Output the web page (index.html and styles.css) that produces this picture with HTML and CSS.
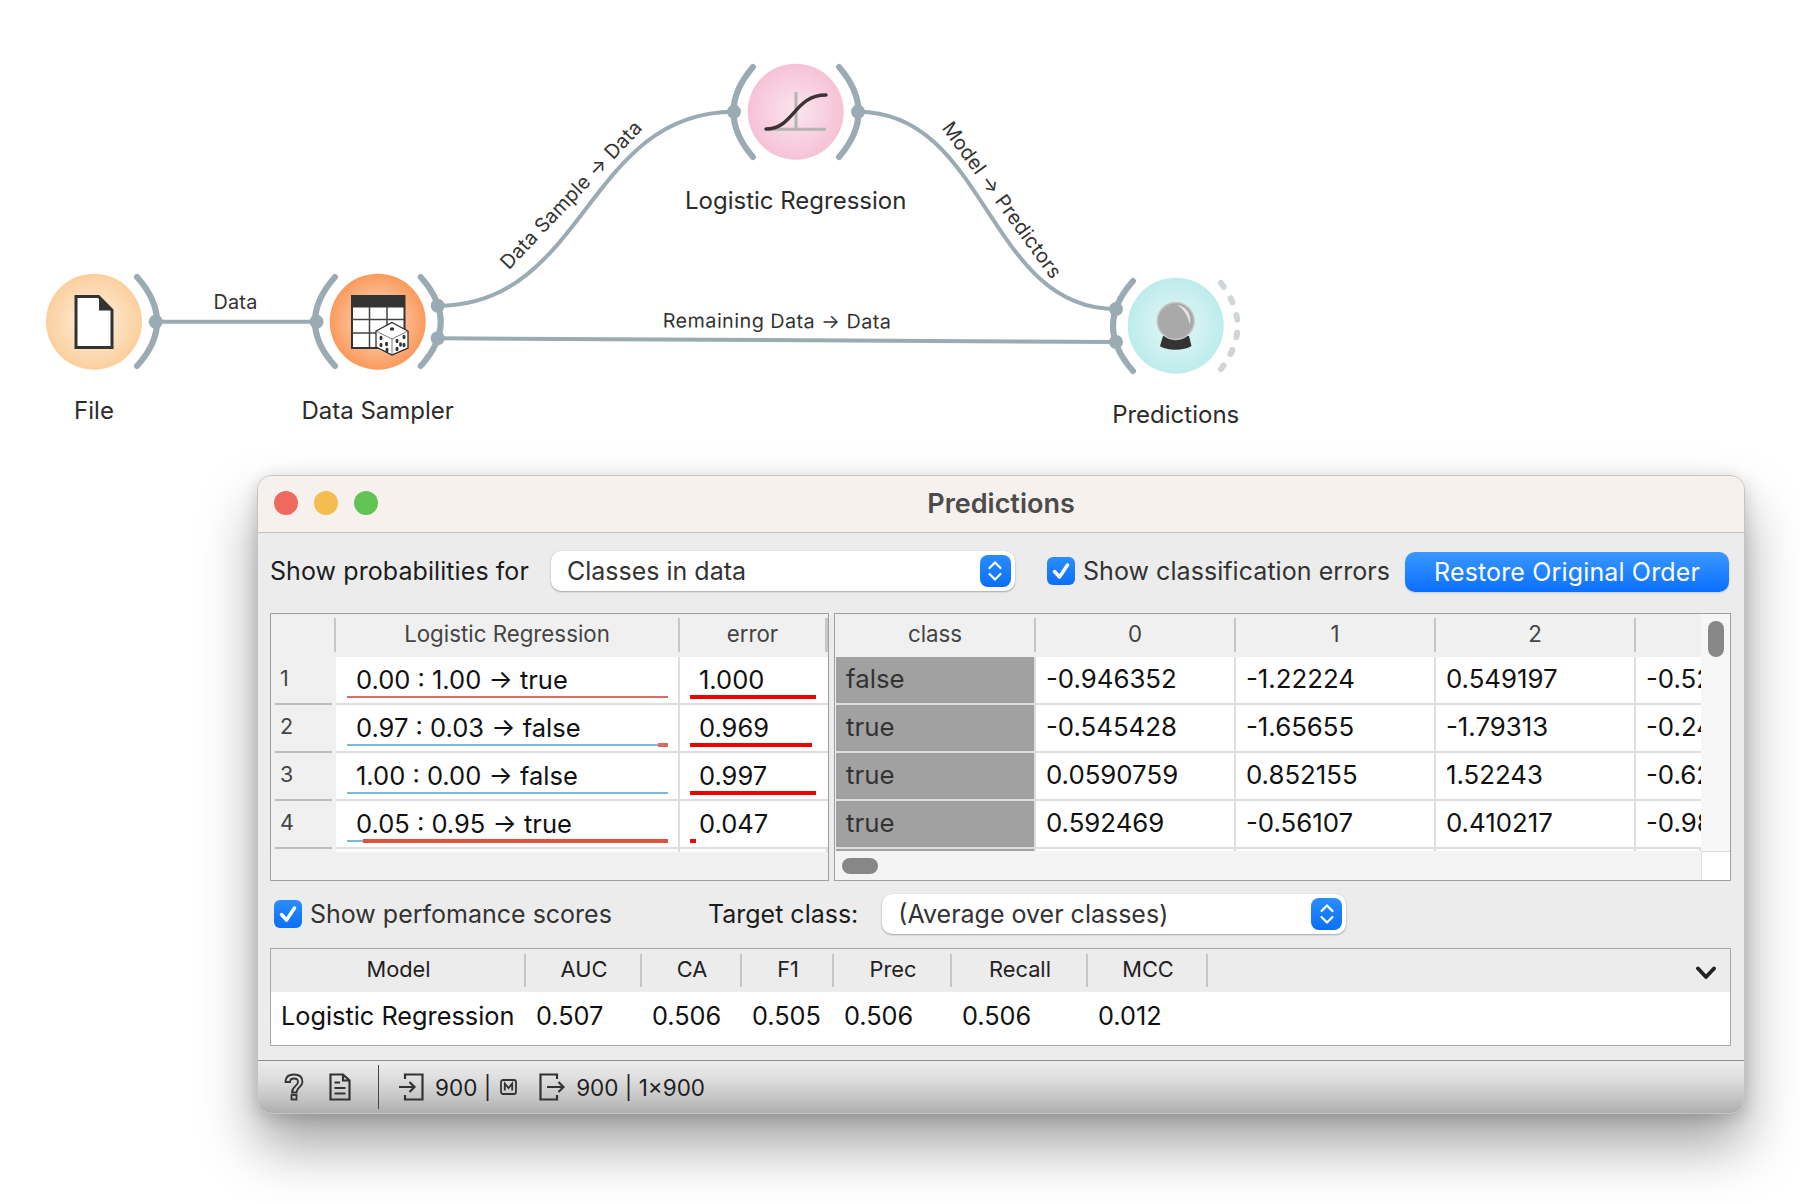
FILE: index.html
```html
<!DOCTYPE html>
<html lang="en">
<head>
<meta charset="utf-8">
<title>Predictions</title>
<link rel="stylesheet" href="styles.css">
</head>
<body>
<svg class="canvas" width="1800" height="470" viewBox="0 0 1800 470">
  <defs>
    <radialGradient id="gFile"><stop offset="0" stop-color="#fff3e4"/><stop offset="1" stop-color="#fbcf9d"/></radialGradient>
    <radialGradient id="gSampler"><stop offset="0" stop-color="#fde0cc"/><stop offset="1" stop-color="#fb9a5c"/></radialGradient>
    <radialGradient id="gLogit"><stop offset="0" stop-color="#fae6ee"/><stop offset="1" stop-color="#f6c2d6"/></radialGradient>
    <radialGradient id="gPred"><stop offset="0" stop-color="#e6f7f7"/><stop offset="1" stop-color="#bdeceb"/></radialGradient>
  </defs>

  <path class="edge" d="M157 321.7H315"/>
  <path class="edge" d="M438 305.7C586 305.7 586 111.7 734 111.7"/>
  <path class="edge" d="M438 338.3L1116 342"/>
  <path class="edge" d="M858 111.7C987 111.7 987 309 1116 309"/>

  <text class="edge-label" x="235.5" y="309" text-anchor="middle">Data</text>
  <text class="edge-label wide" x="777" y="328" text-anchor="middle" transform="rotate(0.3 777 328)">Remaining Data → Data</text>
  <text class="edge-label" x="576" y="199.500" text-anchor="middle" transform="rotate(-46.5 576 199.500)">Data Sample → Data</text>
  <text class="edge-label" x="996.500" y="204" text-anchor="middle" transform="rotate(54 996.500 204)">Model → Predictors</text>

  <path class="anchor" d="M137 277Q177 322 137 366"/>
  <circle class="dot" cx="155.7" cy="321.7" r="7"/>
  <path class="anchor" d="M335 277Q295 322 335 366"/>
  <circle class="dot" cx="316.5" cy="321.7" r="7"/>
  <path class="anchor" d="M420.7 277Q460.7 322 420.7 366"/>
  <circle class="dot" cx="437.7" cy="305.7" r="7"/>
  <circle class="dot" cx="437.7" cy="338.3" r="7"/>
  <path class="anchor" d="M753 67Q714 112 753 157"/>
  <circle class="dot" cx="734" cy="111.7" r="7"/>
  <path class="anchor" d="M839 67Q878 112 839 157"/>
  <circle class="dot" cx="858" cy="111.7" r="7"/>
  <path class="anchor" d="M1133 281Q1093 326 1133 371"/>
  <circle class="dot" cx="1116" cy="309" r="7"/>
  <circle class="dot" cx="1116" cy="342" r="7"/>
  <path class="anchor-off" d="M1221 283Q1254 326 1221 369"/>

  <circle cx="94" cy="321.7" r="48" fill="url(#gFile)"/>
  <path class="ink-doc" d="M76 296.5H98.5L112 310V347.5H76Z"/>
  <path class="ink" d="M99 296L113.5 310.5H99Z"/>

  <circle cx="377.7" cy="321.7" r="48" fill="url(#gSampler)"/>
  <rect class="grid-bg" x="352" y="296" width="52.500" height="52"/>
  <rect class="ink" x="351" y="295" width="54" height="12.500"/>
  <path class="grid-line" d="M369.500 307V348M387 307V348M352 319.500H404M352 333H404"/>
  <path class="die" d="M392 322.500L408 331V348L392 355L376 347V331Z"/>
  <path class="die-edge" d="M376 331L392 339L408 331M392 339V355"/>
  <g class="ink">
    <ellipse cx="392" cy="329" rx="2.300" ry="1.700"/>
    <ellipse cx="381" cy="338" rx="1.500" ry="2.300"/><ellipse cx="386.500" cy="344" rx="1.500" ry="2.300"/>
    <ellipse cx="381" cy="345" rx="1.500" ry="2.300"/><ellipse cx="387" cy="350" rx="1.500" ry="2.300"/>
    <ellipse cx="397" cy="341" rx="1.500" ry="2.300"/><ellipse cx="404" cy="337" rx="1.500" ry="2.300"/>
    <ellipse cx="400.500" cy="344.500" rx="1.500" ry="2.300"/><ellipse cx="397" cy="349" rx="1.500" ry="2.300"/><ellipse cx="404" cy="345" rx="1.500" ry="2.300"/>
  </g>

  <circle cx="795.7" cy="111.7" r="48" fill="url(#gLogit)"/>
  <path class="axis" d="M796 92V129.300M766 129.300H826"/>
  <path class="sigmoid" d="M766 129C794 129 794 95 826 95"/>

  <circle cx="1175.700" cy="325.700" r="48" fill="url(#gPred)"/>
  <path class="ink" d="M1163 336H1189L1191.500 346C1184 351 1167 351 1160 346Z"/>
  <circle class="ball" cx="1175.700" cy="321" r="18.500"/>
  <path class="ball-shine" d="M1177 305C1186 306 1192 314 1190 325C1188 316 1184 309 1177 305Z"/>

  <text class="node-label" x="94" y="419" text-anchor="middle">File</text>
  <text class="node-label" x="377.700" y="419" text-anchor="middle">Data Sampler</text>
  <text class="node-label" x="795.700" y="209" text-anchor="middle">Logistic Regression</text>
  <text class="node-label" x="1175.700" y="423" text-anchor="middle">Predictions</text>
</svg>

<main class="window">
  <header class="titlebar">
    <div class="lights"><span class="light red"></span><span class="light yellow"></span><span class="light green"></span></div>
    <div class="title">Predictions</div>
  </header>

  <section class="controls">
    <span class="label label-top">Show probabilities for</span>
    <div class="combo combo-top"><span>Classes in data</span>
      <span class="combo-btn"><svg width="18" height="24" viewBox="0 0 18 24"><path d="M3.500 9L9 3.500L14.500 9M3.500 15L9 20.500L14.500 15"/></svg></span>
    </div>
    <label class="check check-top"><span class="box"><svg width="22" height="22" viewBox="0 0 22 22"><path d="M4.500 11.500L9.500 17L17.500 5"/></svg></span><span>Show classification errors</span></label>
    <button class="primary">Restore Original Order</button>
  </section>

  <section class="tables">
    <div class="view view-left">
      <div class="hcell"></div><div class="hcell">Logistic Regression</div><div class="hcell">error</div>

      <div class="rowhead"><span>1</span></div>
      <div class="pred"><div class="pred-text">0.00 : 1.00 → true</div><div class="bar"><i class="seg thin coral" style="width:100%"></i></div></div>
      <div class="pred err"><div class="pred-text">1.000</div><div class="bar"><i class="seg red" style="width:100%"></i></div></div>

      <div class="rowhead"><span>2</span></div>
      <div class="pred"><div class="pred-text">0.97 : 0.03 → false</div><div class="bar"><i class="seg thin blue" style="width:97%"></i><i class="seg mid coral" style="width:3%"></i></div></div>
      <div class="pred err"><div class="pred-text">0.969</div><div class="bar"><i class="seg red" style="width:97%"></i></div></div>

      <div class="rowhead"><span>3</span></div>
      <div class="pred"><div class="pred-text">1.00 : 0.00 → false</div><div class="bar"><i class="seg thin blue" style="width:100%"></i></div></div>
      <div class="pred err"><div class="pred-text">0.997</div><div class="bar"><i class="seg red" style="width:99.700%"></i></div></div>

      <div class="rowhead"><span>4</span></div>
      <div class="pred"><div class="pred-text">0.05 : 0.95 → true</div><div class="bar"><i class="seg thin blue" style="width:5%"></i><i class="seg strong" style="width:95%"></i></div></div>
      <div class="pred err"><div class="pred-text">0.047</div><div class="bar"><i class="seg red" style="width:4.700%"></i></div></div>

      <div class="stub plain"></div><div class="stub"></div><div class="stub"></div>
      <div class="foot"></div>
    </div>

    <div class="view view-right">
      <div class="data">
        <div class="hcell">class</div><div class="hcell">0</div><div class="hcell">1</div><div class="hcell">2</div><div class="hcell"></div>
        <div class="cell cls">false</div><div class="cell">-0.946352</div><div class="cell">-1.22224</div><div class="cell">0.549197</div><div class="cell">-0.523881</div>
        <div class="cell cls">true</div><div class="cell">-0.545428</div><div class="cell">-1.65655</div><div class="cell">-1.79313</div><div class="cell">-0.244102</div>
        <div class="cell cls">true</div><div class="cell">0.0590759</div><div class="cell">0.852155</div><div class="cell">1.52243</div><div class="cell">-0.621874</div>
        <div class="cell cls">true</div><div class="cell">0.592469</div><div class="cell">-0.56107</div><div class="cell">0.410217</div><div class="cell">-0.983310</div>
        <div class="stub cls"></div><div class="stub"></div><div class="stub"></div><div class="stub"></div><div class="stub"></div>
      </div>
      <div class="vscroll"><span class="vthumb"></span></div>
      <div class="hscroll"><span class="hthumb"></span></div>
      <div class="corner"></div>
    </div>
  </section>

  <section class="options">
    <label class="check check-perf"><span class="box"><svg width="22" height="22" viewBox="0 0 22 22"><path d="M4.500 11.500L9.500 17L17.500 5"/></svg></span><span>Show perfomance scores</span></label>
    <span class="label target">Target class:</span>
    <div class="combo combo-target"><span>(Average over classes)</span>
      <span class="combo-btn"><svg width="18" height="24" viewBox="0 0 18 24"><path d="M3.500 9L9 3.500L14.500 9M3.500 15L9 20.500L14.500 15"/></svg></span>
    </div>
  </section>

  <section class="scores">
    <div class="hcell">Model</div><div class="hcell">AUC</div><div class="hcell">CA</div><div class="hcell">F1</div><div class="hcell">Prec</div><div class="hcell">Recall</div><div class="hcell">MCC</div>
    <div class="hcell hlast"><svg width="20" height="14" viewBox="0 0 20 14"><path d="M2 2.500L10 11L18 2.500"/></svg></div>
    <div class="score">Logistic Regression</div><div class="score">0.507</div><div class="score">0.506</div><div class="score">0.505</div><div class="score">0.506</div><div class="score">0.506</div><div class="score">0.012</div><div class="score"></div>
  </section>

  <footer class="status">
    <svg class="ico ico-help" width="20" height="28" viewBox="0 0 20 28"><path d="M1.500 9C1.500 4 5 1.500 10 1.500C15 1.500 18.500 4 18.500 9C18.500 14 12.500 14 12.500 19.500H8C8 13 14 13 14 9C14 6.500 12.500 5.500 10 5.500C7.500 5.500 6 6.500 6 9Z"/><rect x="7.500" y="22" width="5" height="4.500"/></svg>
    <svg class="ico ico-doc" width="22" height="28" viewBox="0 0 22 28"><path d="M1.500 1.500H14L20.500 7.500V26.500H1.500ZM14 1.500V7.500H20.500M5.500 9.500H11M5.500 15H16.500M5.500 20.500H16.500"/></svg>
    <span class="vsep"></span>
    <svg class="ico ico-in" width="26" height="28" viewBox="0 0 26 28"><path d="M7 6V1.500H24.500V26.500H7V22M1 14H16M11.500 9L16.500 14L11.500 19"/></svg>
    <span class="stat stat-in">900 |</span>
    <svg class="ico ico-m" width="17" height="16" viewBox="0 0 17 16"><rect x="1" y="1" width="15" height="14" rx="2"/><path d="M4.800 11.500V4.500L8.500 9L12.200 4.500V11.500"/></svg>
    <svg class="ico ico-out" width="26" height="28" viewBox="0 0 26 28"><path d="M18 6V1.500H1.500V26.500H18V22M8 14H24M19.500 9L24.500 14L19.500 19"/></svg>
    <span class="stat">900 | 1×900</span>
  </footer>
</main>
</body>
</html>
```

FILE: styles.css
```css
* { box-sizing: border-box; }
html, body { margin: 0; padding: 0; }
body {
  position: relative;
  width: 1800px;
  height: 1204px;
  overflow: hidden;
  background: #fff;
  font-family: Inter, "Liberation Sans", sans-serif;
  color: #1c1c1c;
}

/* workflow canvas */
.canvas { position: absolute; left: 0; top: 0; }
.edge { fill: none; stroke: #9babb4; stroke-width: 4; }
.anchor { fill: none; stroke: #9babb4; stroke-width: 6; stroke-linecap: round; }
.anchor-off { fill: none; stroke: #d0d5d8; stroke-width: 6; stroke-linecap: round; stroke-dasharray: 4.500 13.400; }
.dot { fill: #9babb4; }
.edge-label { font-size: 19.800px; fill: #333; letter-spacing: .25px; }
.edge-label.wide { letter-spacing: .45px; }
.node-label { font-size: 24px; fill: #2b2b2b; }
.ink { fill: #333; }
.ink-doc { fill: #fff; stroke: #333; stroke-width: 3; }
.grid-bg { fill: #fff; stroke: #333; stroke-width: 2; }
.grid-line { fill: none; stroke: #444; stroke-width: 1.500; }
.die { fill: #fff; stroke: #222; stroke-width: 1.200; }
.die-edge { fill: none; stroke: #555; stroke-width: .8; }
.axis { fill: none; stroke: #b5b3b4; stroke-width: 3; }
.sigmoid { fill: none; stroke: #3b3236; stroke-width: 3.500; stroke-linecap: round; }
.ball { fill: #a9a9a9; stroke: #c6c6c6; stroke-width: 1.500; }
.ball-shine { fill: #e4e4e4; }

/* window */
.window {
  position: absolute;
  left: 257px;
  top: 475px;
  width: 1488px;
  height: 639px;
  display: flex;
  flex-direction: column;
  border: 1px solid #c4c4c4;
  border-radius: 15px;
  overflow: hidden;
  background: #ececec;
  box-shadow: 0 32px 56px rgba(0, 0, 0, .36), 0 4px 16px rgba(0, 0, 0, .16);
}
.titlebar {
  flex: none;
  height: 57px;
  display: grid;
  grid-template-columns: 1fr auto 1fr;
  align-items: center;
  padding: 0 16px 2px;
  background: #f6f1ec;
  border-bottom: 1px solid #c2c2c2;
}
.lights { display: flex; gap: 16px; }
.light { width: 24px; height: 24px; border-radius: 50%; }
.red { background: #ee6a5f; }
.yellow { background: #f5bd4f; }
.green { background: #61c454; }
.title { font-size: 27px; font-weight: 600; color: #4b4b4b; }

.label { font-size: 25px; color: #1c1c1c; }
.label-top { letter-spacing: .08px; }

.controls {
  flex: none;
  height: 80px;
  display: flex;
  align-items: center;
  padding: 0 0 5px 12px;
}
.combo {
  height: 40px;
  display: flex;
  align-items: center;
  justify-content: space-between;
  padding: 0 4px 0 16px;
  background: #fff;
  border-radius: 10px;
  font-size: 25px;
  color: #333;
  box-shadow: 0 1px 2px rgba(0, 0, 0, .3), 0 0 1px rgba(0, 0, 0, .15);
}
.combo-top { width: 464px; margin-left: 22px; }
.combo-btn {
  width: 31px;
  height: 32px;
  display: flex;
  align-items: center;
  justify-content: center;
  border-radius: 8px;
  background: linear-gradient(#2a8dff, #0a6ff5);
}
.combo-btn svg { fill: none; stroke: #fff; stroke-width: 2.200; stroke-linecap: round; stroke-linejoin: round; }
.check { display: flex; align-items: center; font-size: 25px; color: #333; }
.box {
  width: 28px;
  height: 28px;
  display: flex;
  align-items: center;
  justify-content: center;
  border-radius: 6px;
  background: linear-gradient(#2a8dff, #0a6ff5);
}
.box svg { fill: none; stroke: #fff; stroke-width: 3.500; stroke-linecap: round; stroke-linejoin: round; }
.check .box + span { margin-left: 8px; }
.check-top { margin-left: 32px; letter-spacing: .06px; }
.primary {
  width: 324px;
  height: 40px;
  margin: 3px 0 0 15px;
  border: 0;
  border-radius: 10px;
  background: linear-gradient(#3a98ff, #0b6fff);
  color: #fff;
  font: 25px Inter, "Liberation Sans", sans-serif;
  letter-spacing: .15px;
  box-shadow: 0 1px 2px rgba(0, 0, 0, .15);
}

/* tables */
.tables {
  flex: none;
  height: 268px;
  display: flex;
  gap: 5px;
  margin: 0 13px 0 12px;
}
.view { border: 1px solid #9f9f9f; background: #f0f0f0; }
.view-left {
  width: 559px;
  display: grid;
  grid-template-columns: 65px 344px 1fr;
  grid-template-rows: 43px repeat(4, 48px) 3px 1fr;
}
.view-right {
  flex: 1;
  min-width: 0;
  display: grid;
  grid-template-columns: 1fr 29px;
  grid-template-rows: 1fr 29px;
  background: #f0f0f0;
}
.data {
  min-width: 0;
  overflow: hidden;
  display: grid;
  grid-template-columns: 200px 200px 200px 200px 65px;
  grid-template-rows: 43px repeat(4, 48px) 3px;
  padding-left: 1px;
}
.hcell {
  margin: 4px 0 5px;
  padding-bottom: 4px;
  display: flex;
  align-items: center;
  justify-content: center;
  border-right: 2px solid #c6c6c6;
  font-size: 22.300px;
  color: #444;
}
.view .hcell:last-child, .data .hcell:nth-child(5) { border-right: 0; }
.view-left > .hcell:nth-child(3) { border-right: 3px solid #c6c6c6; }
.rowhead {
  margin: 0 4px;
  padding: 0 0 4px 5px;
  display: flex;
  align-items: center;
  font-size: 21.500px;
  color: #444;
  border-bottom: 2px solid #bcbcbc;
}
.pred {
  padding: 8px 10px 0 11px;
  background: #fff;
  border-right: 2px solid #dedede;
  border-bottom: 2px solid #dedede;
  overflow: hidden;
}
.pred.err { padding: 8px 12px 0 10px; border-right: 0; }
.pred-text { height: 30px; line-height: 30px; padding-left: 9px; font-size: 25.500px; color: #111; white-space: nowrap; }
.bar { height: 4px; display: flex; align-items: center; }
.seg { display: block; height: 4px; flex: none; }
.thin { height: 2.500px; }
.mid { height: 4px; }
.coral { background: #d96c5f; }
.blue { background: #7db9d9; }
.strong { background: #e0533a; }
.red { background: #ee6a5f; }
.seg.red { background: #f20000; }
.cell {
  padding: 0 0 4px 10px;
  display: flex;
  align-items: center;
  background: #fff;
  border-right: 2px solid #dedede;
  border-bottom: 2px solid #dedede;
  font-size: 25.800px;
  color: #111;
  white-space: nowrap;
  overflow: hidden;
}
.cell:nth-child(5n) { border-right: 0; }
.cell.cls { background: #a1a1a1; color: #333; border-color: #dedede; }
.stub { background: #fff; border-right: 2px solid #dedede; }
.stub.cls { background: #a1a1a1; }
.stub.plain { background: transparent; border: 0; }
.foot { grid-column: 1 / -1; background: #f1f1f1; }
.vscroll { background: #f6f6f6; padding: 7px 0 0 7px; }
.vthumb { display: block; width: 16px; height: 36px; border-radius: 8px; background: #878787; }
.hscroll { background: #f4f4f4; padding: 7px 0 0 7px; }
.hthumb { display: block; width: 36px; height: 16px; border-radius: 8px; background: #878787; }
.corner { background: #fff; border-left: 1px solid #ddd; border-top: 1px solid #ddd; }

/* options */
.options {
  flex: none;
  height: 67px;
  display: flex;
  align-items: center;
  padding: 0 0 2px 16px;
}
.check-perf { margin-top: 1px; }
.target { margin-left: 96px; margin-top: 1px; }
.combo-target { width: 464px; margin-left: 24px; }

/* scores */
.scores {
  flex: none;
  height: 98px;
  margin: 0 13px 0 12px;
  display: grid;
  grid-template-columns: 255px 116px 100px 92px 118px 136px 120px 1fr;
  grid-template-rows: 43px 1fr;
  border: 1px solid #a8a8a8;
  background: #fff;
}
.scores .hcell { margin: 0; padding: 5px 0 8px; background: #ececec; border-right: 0; color: #222; position: relative; font-size: 21.800px; }
.scores .hcell::after {
  content: "";
  position: absolute;
  right: 0;
  top: 5px;
  bottom: 5px;
  width: 2px;
  background: #c6c6c6;
}
.scores .hlast { justify-content: flex-end; padding: 9px 14px 5px 0; }
.scores .hlast::after { display: none; }
.hlast svg { fill: none; stroke: #222; stroke-width: 3.800; stroke-linecap: round; stroke-linejoin: round; }
.score { padding: 0 0 6px 10px; display: flex; align-items: center; font-size: 25.300px; color: #111; white-space: nowrap; }

/* status bar */
.status {
  margin-top: auto;
  flex: none;
  height: 53px;
  display: flex;
  align-items: center;
  padding-left: 26px;
  border-top: 1px solid #8c8c8c;
  background: linear-gradient(#ececec 0, #e0e0e0 30%, #c6c6c6 70%, #aeaeae 100%);
  font-size: 22.500px;
  color: #1f1f1f;
}
.ico { flex: none; fill: none; stroke: #333; stroke-width: 2; }
.ico-help { stroke-width: 1.800; }
.ico-doc { margin-left: 25px; stroke-width: 2.200; }
.vsep { width: 1px; height: 44px; margin: 0 19px 0 27px; background: #444; }
.ico-in { margin-right: 11px; stroke-width: 2.200; }
.ico-m { margin-left: 9px; stroke-width: 1.800; }
.ico-out { margin-left: 22px; margin-right: 11px; stroke-width: 2.200; }
```
